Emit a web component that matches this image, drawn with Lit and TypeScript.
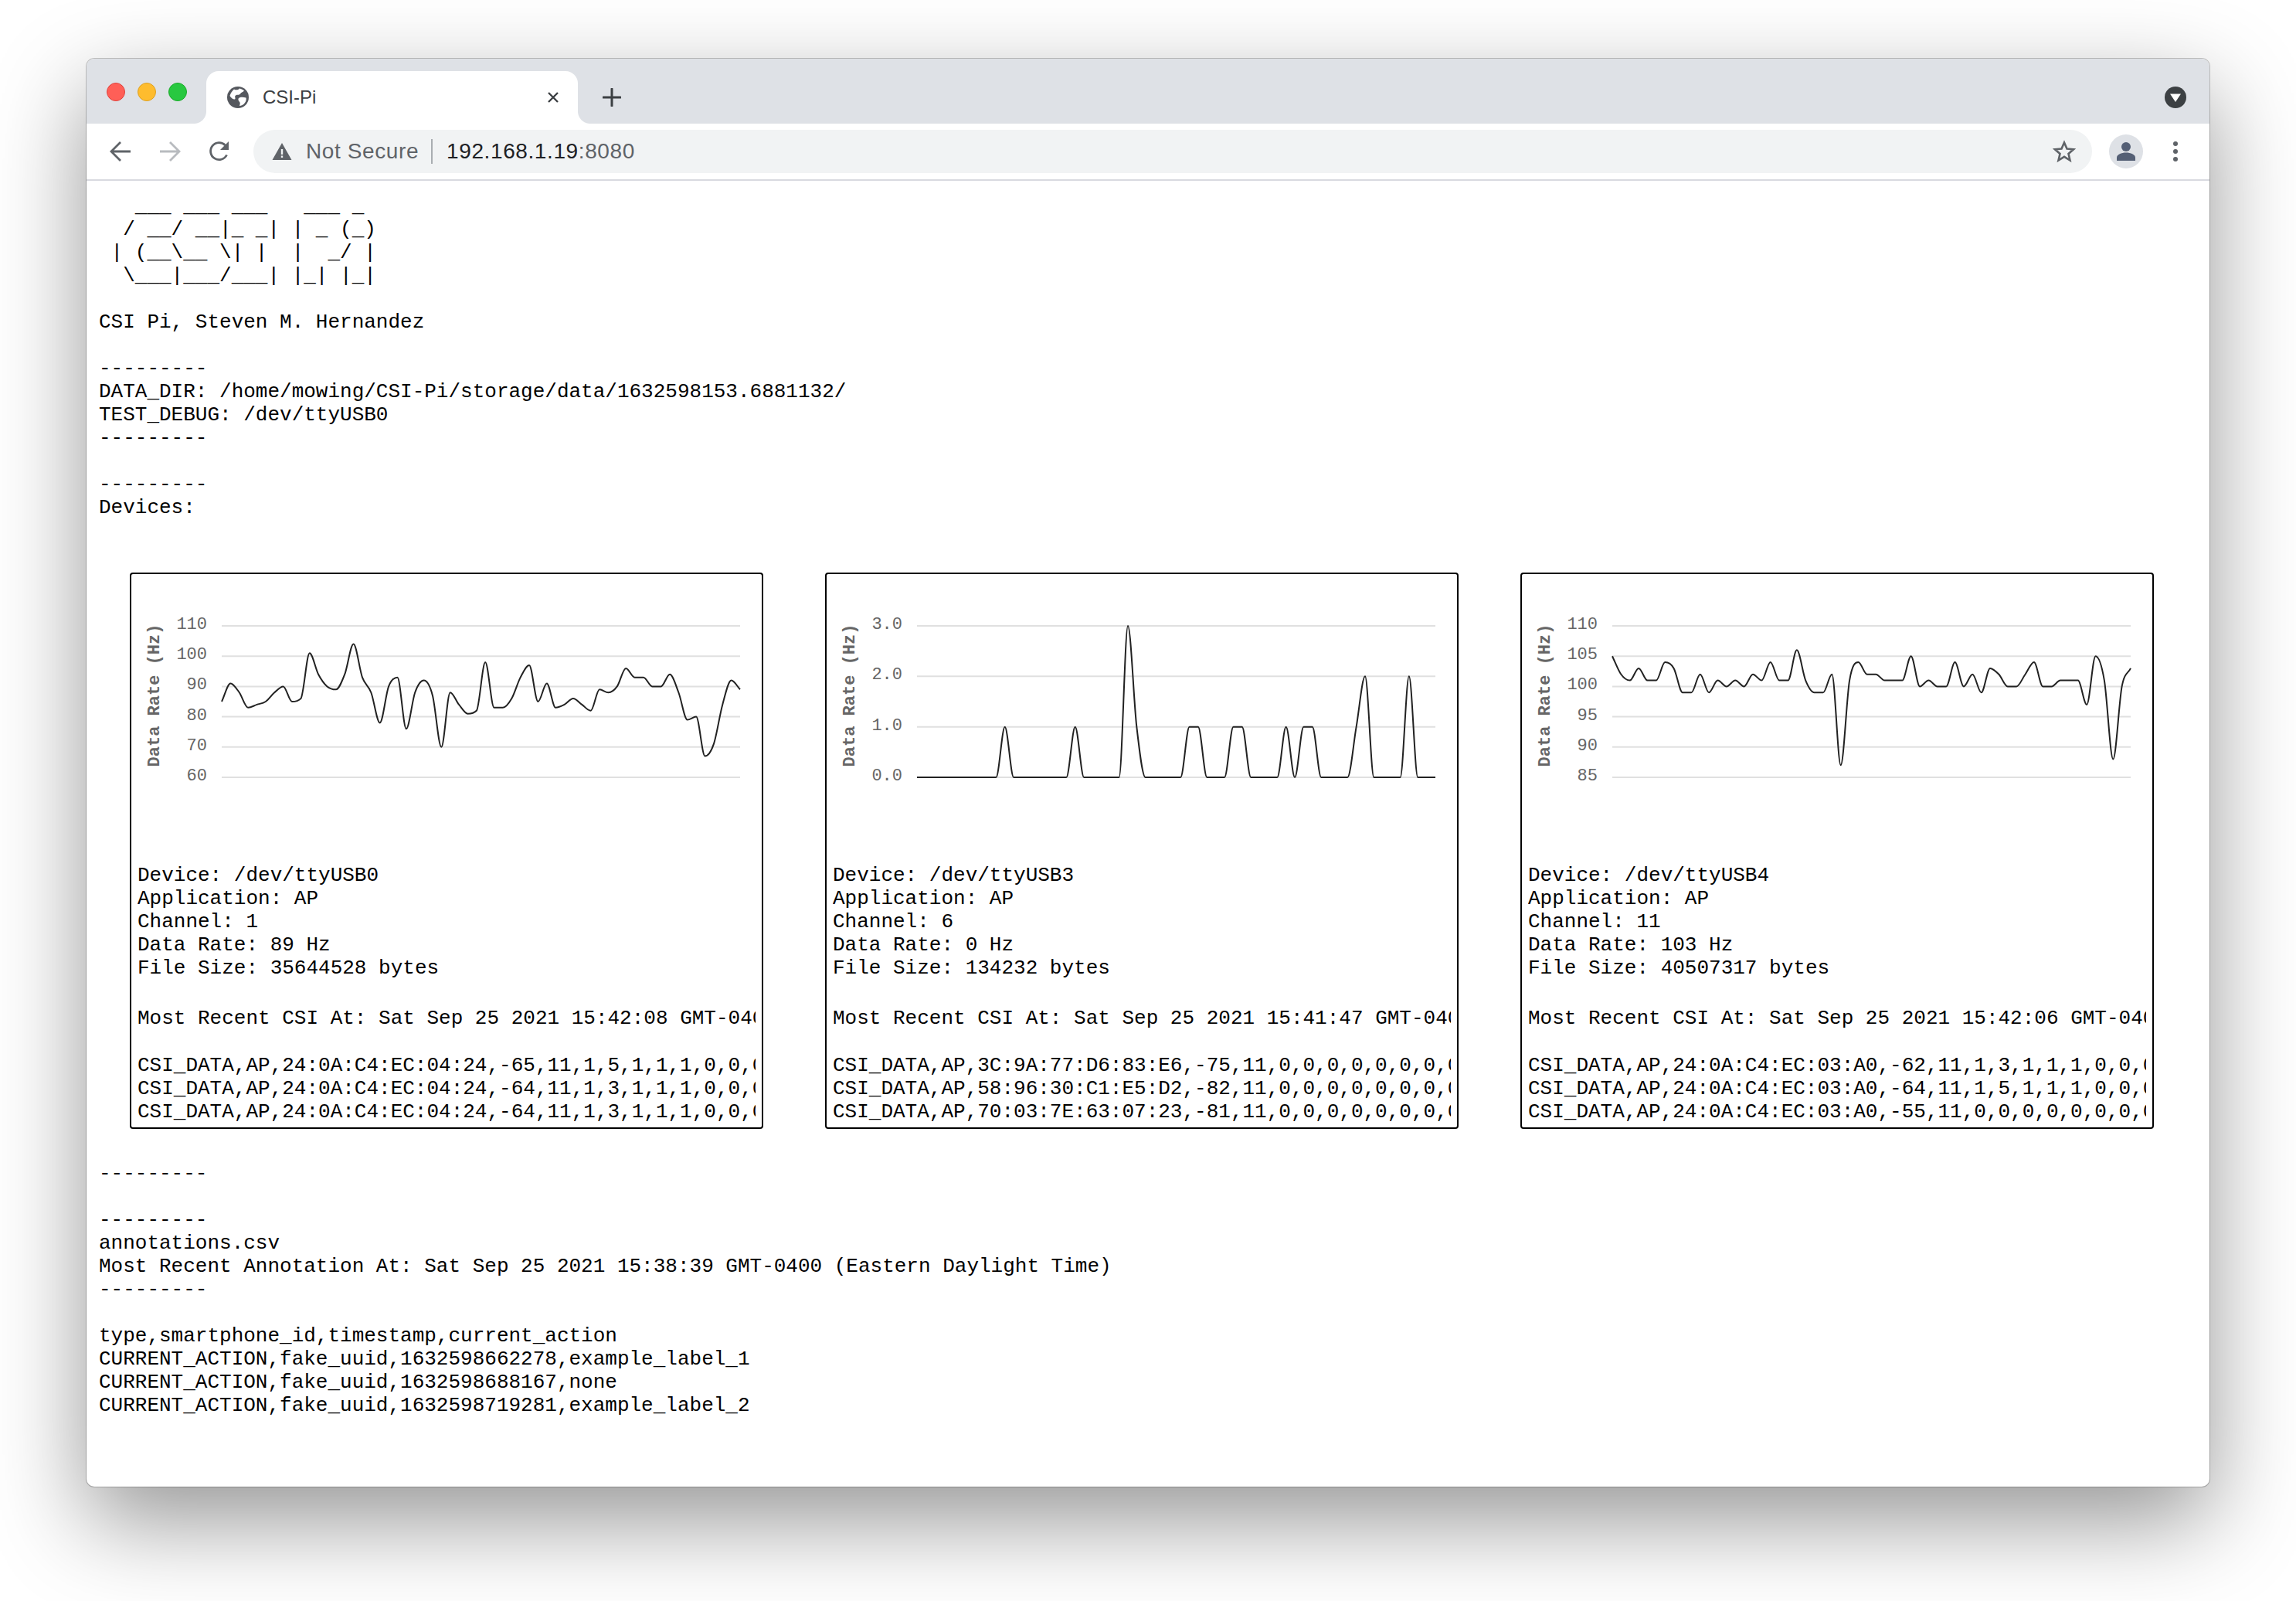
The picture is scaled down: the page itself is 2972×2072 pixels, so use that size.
import { LitElement, html, css, svg } from "lit";
import { customElement } from "lit/decorators.js";

interface Device {
  tty: string; channel: string; rate: string; size: string; recent: string;
  rows: string[]; ticks: string[]; min: number; max: number; data: number[];
}

const DEVICES: Device[] = [
  {
    tty: "/dev/ttyUSB0", channel: "1", rate: "89", size: "35644528", recent: "15:42:08",
    rows: [
      "CSI_DATA,AP,24:0A:C4:EC:04:24,-65,11,1,5,1,1,1,0,0,0,0,0,0",
      "CSI_DATA,AP,24:0A:C4:EC:04:24,-64,11,1,3,1,1,1,0,0,0,0,0,0",
      "CSI_DATA,AP,24:0A:C4:EC:04:24,-64,11,1,3,1,1,1,0,0,0,0,0,0",
    ],
    ticks: ["110", "100", "90", "80", "70", "60"], min: 60, max: 110,
    data: [85,91,88,83,84,85,88,90,85,86,101,94,90,89,94,104,93,88,78,90,93,76,88,92,87,70,88,84,81,82,98,83,83,86,93,97,85,91,83,84,86,84,82,89,88,90,96,93,93,90,90,94,88,79,80,67,71,84,92,89],
  },
  {
    tty: "/dev/ttyUSB3", channel: "6", rate: "0", size: "134232", recent: "15:41:47",
    rows: [
      "CSI_DATA,AP,3C:9A:77:D6:83:E6,-75,11,0,0,0,0,0,0,0,0,0,0,0",
      "CSI_DATA,AP,58:96:30:C1:E5:D2,-82,11,0,0,0,0,0,0,0,0,0,0,0",
      "CSI_DATA,AP,70:03:7E:63:07:23,-81,11,0,0,0,0,0,0,0,0,0,0,0",
    ],
    ticks: ["3.0", "2.0", "1.0", "0.0"], min: 0, max: 3,
    data: [0,0,0,0,0,0,0,0,0,0,1,0,0,0,0,0,0,0,1,0,0,0,0,0,3,1,0,0,0,0,0,1,1,0,0,0,1,1,0,0,0,0,1,0,1,1,0,0,0,0,1,2,0,0,0,0,2,0,0,0],
  },
  {
    tty: "/dev/ttyUSB4", channel: "11", rate: "103", size: "40507317", recent: "15:42:06",
    rows: [
      "CSI_DATA,AP,24:0A:C4:EC:03:A0,-62,11,1,3,1,1,1,0,0,0,0,0,0",
      "CSI_DATA,AP,24:0A:C4:EC:03:A0,-64,11,1,5,1,1,1,0,0,0,0,0,0",
      "CSI_DATA,AP,24:0A:C4:EC:03:A0,-55,11,0,0,0,0,0,0,0,0,0,0,0",
    ],
    ticks: ["110", "105", "100", "95", "90", "85"], min: 85, max: 110,
    data: [105,102,101,103,101,101,104,103,99,99,102,99,101,100,101,100,102,101,104,101,101,106,101,99,99,102,87,101,104,102,102,101,101,101,105,100,101,100,100,104,100,102,99,103,102,100,100,102,104,100,100,101,101,101,97,105,101,88,100,103],
  },
];

const PLOT = { left: 109, right: 780, top: 59, bottom: 255 };

/* Monotone cubic interpolation: flat runs stay flat, with no overshoot. */
function linePath(d: Device): string {
  const n = d.data.length;
  const dx = (PLOT.right - PLOT.left) / (n - 1);
  const ys = d.data.map((v) => PLOT.bottom - ((v - d.min) / (d.max - d.min)) * (PLOT.bottom - PLOT.top));
  const delta: number[] = [];
  for (let i = 0; i < n - 1; i++) delta.push((ys[i + 1] - ys[i]) / dx);
  const m: number[] = ys.map((_, i) => {
    if (i === 0) return delta[0];
    if (i === n - 1) return delta[n - 2];
    return Math.sign(delta[i - 1]) !== Math.sign(delta[i]) ? 0 : (delta[i - 1] + delta[i]) / 2;
  });
  for (let i = 0; i < n - 1; i++) {
    if (delta[i] === 0) { m[i] = 0; m[i + 1] = 0; continue; }
    const a = m[i] / delta[i];
    const b = m[i + 1] / delta[i];
    const sq = a * a + b * b;
    if (sq > 9) {
      const tau = 3 / Math.sqrt(sq);
      m[i] = a * tau * delta[i];
      m[i + 1] = b * tau * delta[i];
    }
  }
  const f = (v: number) => v.toFixed(2);
  let out = `M${f(PLOT.left)} ${f(ys[0])}`;
  for (let i = 1; i < n; i++) {
    const x0 = PLOT.left + (i - 1) * dx;
    const x1 = PLOT.left + i * dx;
    out += `C${f(x0 + dx / 3)} ${f(ys[i - 1] + (m[i - 1] * dx) / 3)} ${f(x1 - dx / 3)} ${f(ys[i] - (m[i] * dx) / 3)} ${f(x1)} ${f(ys[i])}`;
  }
  return out;
}

const ART = String.raw`   ___ ___ ___   ___ _
  / __/ __|_ _| | _ (_)
 | (__\__ \| |  |  _/ |
  \___|___/___| |_| |_|`;

@customElement("app-root")
export class AppRoot extends LitElement {
  static styles = css`
    :host { display: block; width: 2972px; height: 2072px; box-sizing: border-box; padding: 76px 112px 148px; background: #fff; overflow: hidden; }
    .window { height: 100%; display: flex; flex-direction: column; border-radius: 10px; background: #fff; box-shadow: 0 0 0 1px rgba(0,0,0,.22), 0 44px 120px 0 rgba(0,0,0,.42); overflow: hidden; }
    .tabs { height: 84px; flex: none; background: #dee1e6; display: flex; align-items: flex-end; }
    .lights { align-self: flex-start; display: flex; gap: 16px; margin: 31px 0 0 26px; }
    .light { width: 24px; height: 24px; border-radius: 50%; box-sizing: border-box; border: 1px solid; }
    .red { background: #ff5f57; border-color: #e0443e; }
    .amber { background: #febc2e; border-color: #dea123; }
    .green { background: #28c840; border-color: #1aab29; }
    .tab { position: relative; margin-left: 25px; width: 481px; height: 68px; box-sizing: border-box; padding: 0 24px 0 27px; background: #fff; border-radius: 16px 16px 0 0; display: flex; align-items: center; font: 24px "Liberation Sans", sans-serif; color: #3c4043; }
    .tab::before, .tab::after { content: ""; position: absolute; bottom: 0; width: 16px; height: 16px; }
    .tab::before { left: -16px; background: radial-gradient(circle at 0 0, #dee1e6 15.5px, #fff 16.5px); }
    .tab::after { right: -16px; background: radial-gradient(circle at 100% 0, #dee1e6 15.5px, #fff 16.5px); }
    .tab-title { margin-left: 18px; flex: 1; }
    .tab svg { display: block; flex: none; }
    .plus { margin: 0 0 22px 32px; display: block; }
    .spacer { flex: 1; }
    .menu { margin: 0 30px 20px 0; display: block; }
    .toolbar { height: 72px; flex: none; box-sizing: content-box; border-bottom: 2px solid #d9dae0; display: flex; align-items: center; padding-left: 12px; background: #fff; }
    .nav { width: 64px; display: flex; justify-content: center; flex: none; }
    .nav svg, .omni svg, .toolbar > svg { display: block; flex: none; }
    .omni { margin-left: 12px; flex: 1; height: 56px; border-radius: 28px; background: #f1f3f4; display: flex; align-items: center; padding: 0 21px 0 24px; font: 28px "Liberation Sans", sans-serif; letter-spacing: .6px; color: #5f6368; }
    .secure { margin-left: 18px; }
    .sep { width: 2px; height: 32px; background: #a9adb1; margin: 0 18px 0 16px; }
    .host { color: #202124; }
    .url { flex: 1; white-space: pre; }
    .avatar { margin-left: 22px; }
    .dots { margin: 0 41px 0 39px; }
    .page { flex: 1; padding: 18px 0 0 16px; font: 26px/30px "Liberation Mono", monospace; color: #000; overflow: hidden; }
    pre { margin: 0; font: inherit; white-space: pre; }
    .cards { display: flex; gap: 80px; margin: 69px 0 43px 40px; }
    .card { width: 820px; height: 720px; flex: none; box-sizing: border-box; border: 2px solid #000; border-radius: 4px; padding: 8px; }
    .clip { width: 800px; height: 100%; overflow: hidden; }
    .clip svg { display: block; }
    .recent { margin-top: 35px; }
    .rows { margin-top: 31px; }
    .grid { stroke: #e0e0e0; stroke-width: 2; }
    .tick { font: 22px "Liberation Mono", monospace; fill: #666; text-anchor: end; }
    .title { font: bold 22px "Liberation Mono", monospace; fill: #666; text-anchor: middle; }
    .line { fill: none; stroke: #222; stroke-width: 2; }
  `;

  private chart(d: Device) {
    const step = (PLOT.bottom - PLOT.top) / (d.ticks.length - 1);
    return html`<svg width="800" height="367" viewBox="0 0 800 367">
      ${d.ticks.map((t, i) => svg`
        <line class="grid" x1=${PLOT.left} x2=${PLOT.right} y1=${PLOT.top + i * step} y2=${PLOT.top + i * step}></line>
        <text class="tick" x="90" y=${PLOT.top + i * step + 4}>${t}</text>`)}
      <text class="title" transform="translate(28 149) rotate(-90)">Data Rate (Hz)</text>
      <path class="line" d=${linePath(d)}></path>
    </svg>`;
  }

  private card(d: Device) {
    return html`<div class="card"><div class="clip">
      ${this.chart(d)}
      <pre class="info">Device: ${d.tty}
Application: AP
Channel: ${d.channel}
Data Rate: ${d.rate} Hz
File Size: ${d.size} bytes</pre>
      <pre class="recent">Most Recent CSI At: Sat Sep 25 2021 ${d.recent} GMT-0400 (Eastern Daylight Time)</pre>
      <pre class="rows">${d.rows.join("\n")}</pre>
    </div></div>`;
  }

  render() {
    return html`<div class="window">
      <div class="tabs">
        <div class="lights"><div class="light red"></div><div class="light amber"></div><div class="light green"></div></div>
        <div class="tab">
          <svg width="28" height="28" viewBox="0 0 28 28">
            <circle cx="14" cy="14" r="14" fill="#55585e"></circle>
            <path d="M9 3.500c2 1.500 5.500 1 7-1 2.500 .5 4.500 1.500 6 3-2 2-4 2-5 4-1.500 2-5 .5-6.500 2.500-1 1.500 1 3.500-.5 4.500-2 .5-5-2-6.500-4.500 1-3.500 3-6.500 5.500-8.500z" fill="#fff"></path>
            <path d="M15 15c2-1.500 5.500-1.500 9.500-.5.5 2 0 4.500-1.500 6.500-1.500 2.500-5 4-7 4 .5-2 1-3 .5-4.500-1-1.500-3-3.500-1.500-5.500z" fill="#fff"></path>
          </svg>
          <span class="tab-title">CSI-Pi</span>
          <svg width="16" height="16" viewBox="0 0 16 16"><path d="M2 2l12 12M14 2L2 14" stroke="#3c4043" stroke-width="2.400" fill="none"></path></svg>
        </div>
        <svg class="plus" width="24" height="24" viewBox="0 0 24 24"><path d="M12 1v22M1 12h22" stroke="#3c4043" stroke-width="3" stroke-linecap="round"></path></svg>
        <div class="spacer"></div>
        <svg class="menu" width="28" height="28" viewBox="0 0 28 28"><circle cx="14" cy="14" r="14" fill="#3c4043"></circle><path d="M7 9.500h14L14 20z" fill="#fff"></path></svg>
      </div>
      <div class="toolbar">
        <div class="nav"><svg width="28" height="28" viewBox="0 0 28 28"><path d="M27 14H3M14 2L2 14l12 12" fill="none" stroke="#5f6368" stroke-width="2.800"></path></svg></div>
        <div class="nav"><svg width="28" height="28" viewBox="0 0 28 28"><path d="M1 14h24M14 2l12 12-12 12" fill="none" stroke="#b8bbbf" stroke-width="2.800"></path></svg></div>
        <div class="nav"><svg width="28" height="28" viewBox="0 0 28 28"><path d="M23.500 18.500A11 11 0 1 1 21.500 6" fill="none" stroke="#5f6368" stroke-width="2.800"></path><path d="M26 1v11H15z" fill="#5f6368"></path></svg></div>
        <div class="omni">
          <svg width="26" height="24" viewBox="0 0 26 24"><path fill-rule="evenodd" d="M13 1L25.500 23H.5zM11.800 9v7h2.400V9zM11.800 17.500v2.500h2.400v-2.500z" fill="#5f6368"></path></svg>
          <span class="secure">Not Secure</span>
          <span class="sep"></span>
          <span class="url"><span class="host">192.168.1.19</span>:8080</span>
          <svg width="30" height="30" viewBox="0 0 30 30"><path d="M15 3.500l3.500 8 8.500 .8-6.500 5.700 2 8.500L15 21.900 7.500 26.500l2-8.500L3 12.300l8.500-.8z" fill="none" stroke="#5f6368" stroke-width="2.600"></path></svg>
        </div>
        <svg class="avatar" width="44" height="44" viewBox="0 0 44 44"><circle cx="22" cy="22" r="22" fill="#dee1e6"></circle><circle cx="22" cy="16" r="6" fill="#545f75"></circle><path d="M10 34v-4c0-4 6-6.500 12-6.500s12 2.500 12 6.500v4z" fill="#545f75"></path></svg>
        <svg class="dots" width="6" height="26" viewBox="0 0 6 26"><circle cx="3" cy="3" r="3" fill="#5f6368"></circle><circle cx="3" cy="13" r="3" fill="#5f6368"></circle><circle cx="3" cy="23" r="3" fill="#5f6368"></circle></svg>
      </div>
      <div class="page">
        <pre>${ART}

CSI Pi, Steven M. Hernandez

---------
DATA_DIR: /home/mowing/CSI-Pi/storage/data/1632598153.6881132/
TEST_DEBUG: /dev/ttyUSB0
---------

---------
Devices:</pre>
        <div class="cards">${DEVICES.map((d) => this.card(d))}</div>
        <pre>---------

---------
annotations.csv
Most Recent Annotation At: Sat Sep 25 2021 15:38:39 GMT-0400 (Eastern Daylight Time)
---------

type,smartphone_id,timestamp,current_action
CURRENT_ACTION,fake_uuid,1632598662278,example_label_1
CURRENT_ACTION,fake_uuid,1632598688167,none
CURRENT_ACTION,fake_uuid,1632598719281,example_label_2</pre>
      </div>
    </div>`;
  }
}
